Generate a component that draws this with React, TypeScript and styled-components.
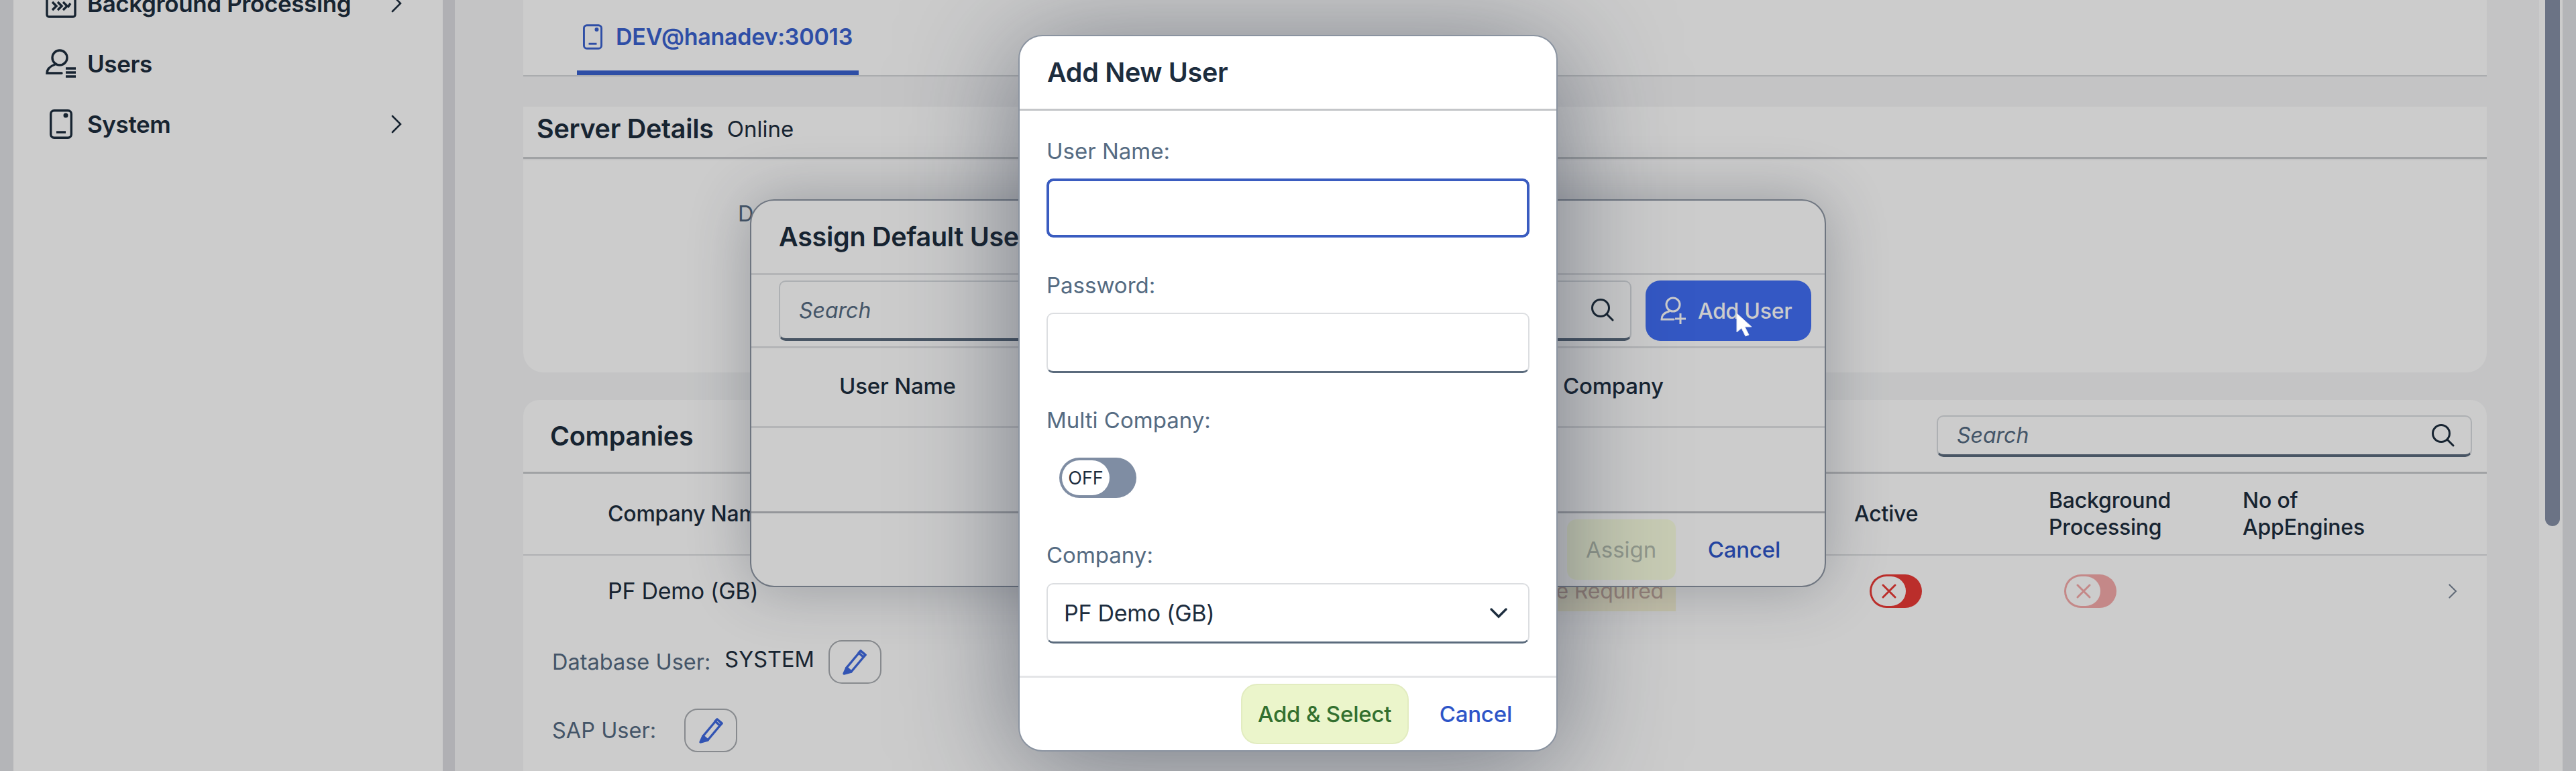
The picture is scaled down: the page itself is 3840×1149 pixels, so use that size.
import React from 'react';
import styled, { createGlobalStyle } from 'styled-components';

const Global = createGlobalStyle`
  html, body { margin: 0; padding: 0; width: 3840px; height: 1149px; overflow: hidden; background: #f5f6f7; }
  body { font-family: Inter, "Noto Sans", "Liberation Sans", sans-serif; color: #1d2d3e; }
  * { box-sizing: border-box; }
`;

const Page = styled.div`
  position: relative;
  display: flex;
  width: 3840px;
  height: 1149px;
  overflow: hidden;
  background: #f5f6f7;
`;
const Edge = styled.div`
  flex: 0 0 20px;
  background: #e2e3e7;
`;
const Sidebar = styled.nav`
  flex: 0 0 658px;
  background: #dcdde2;
  padding-right: 18px;
`;
const NavList = styled.ul`
  list-style: none;
  margin: -40px 0 0;
  padding: 0;
  height: 1189px;
  background: #fff;
`;
const NavItem = styled.li`
  display: flex;
  align-items: center;
  height: 90px;
  padding-left: 48px;
  font-size: 35px;
  font-weight: 600;
  letter-spacing: -0.4px;
  color: #1d2d3e;
`;
const NavIcon = styled.span`
  display: flex;
  width: 46px;
  margin-right: 16px;
  justify-content: center;
`;
const NavLabel = styled.span`
  flex: 1;
`;
const NavChevron = styled.span`
  display: flex;
  margin-right: 60px;
`;
const Main = styled.main`
  flex: 1;
  padding: 0 78px 0 102px;
  display: flex;
  flex-direction: column;
  min-width: 0;
`;
const TabCard = styled.section`
  flex: 0 0 110px;
  background: #fff;
  border-bottom: 2px solid #d5d7da;
  padding-left: 80px;
  display: flex;
`;
const Tab = styled.div`
  display: flex;
  align-items: center;
  gap: 20px;
  height: 112px;
  width: 420px;
  padding: 4px 0 0 9px;
  border-bottom: 7px solid #3a62d0;
  color: #3a62d0;
  font-size: 34px;
  font-weight: 600;
  letter-spacing: -0.25px;
  white-space: nowrap;
`;
const ServerCard = styled.section`
  margin-top: 45px;
  flex: 0 0 396px;
  display: flex;
  flex-direction: column;
`;
const ServerHeader = styled.header`
  flex: 0 0 78px;
  background: #fff;
  border-bottom: 3px solid #c9cbce;
  display: flex;
  align-items: center;
  padding: 0 0 9px 20px;
  gap: 20px;
`;
const CardTitle = styled.h2`
  margin: 0;
  font-size: 39.5px;
  font-weight: 600;
  letter-spacing: -0.3px;
  color: #1d2d3e;
`;
const Status = styled.span`
  font-size: 33px;
`;
const ServerBody = styled.div`
  flex: 1;
  margin-top: 2px;
  background: #fff;
  border-radius: 0 0 30px 30px;
  padding: 60px 0 0 320px;
`;
const MutedLabel = styled.span`
  font-size: 32.5px;
  color: #556b82;
  white-space: nowrap;
`;
const CompaniesCard = styled.section`
  margin-top: 41px;
  flex: 1;
  background: #fff;
  border-radius: 24px 24px 0 0;
  display: flex;
  flex-direction: column;
`;
const CompaniesHeader = styled.header`
  flex: 0 0 110px;
  display: flex;
  align-items: center;
  justify-content: space-between;
  padding: 0 22px 0 40px;
  border-bottom: 3px solid #c9cbce;
`;
const SearchBox = styled.div<{ $w: number; $h: number }>`
  width: ${p => p.$w}px;
  height: ${p => p.$h}px;
  display: flex;
  align-items: center;
  justify-content: space-between;
  background: #fff;
  border: 2px solid #d9dce0;
  border-bottom: 4px solid #5b6b7d;
  border-radius: 10px;
  padding: 0 24px 0 28px;
`;
const SearchHint = styled.span`
  font-size: 32px;
  font-style: italic;
  color: #556b82;
`;
const Columns = styled.div<{ $h: number; $line: string }>`
  flex: 0 0 ${p => p.$h}px;
  display: grid;
  grid-template-columns: 1400px 458px 290px 289px 1fr;
  align-items: center;
  padding-left: 126px;
  border-bottom: 2px solid ${p => p.$line};
  font-size: 32px;
  font-weight: 500;
  line-height: 40px;
  letter-spacing: -0.2px;
  color: #1d2d3e;
`;
const BodyText = styled.span`
  font-size: 34px;
  font-weight: 400;
  letter-spacing: -0.3px;
`;
const Badge = styled.span`
  justify-self: start;
  width: 192px;
  height: 60px;
  display: flex;
  align-items: center;
  justify-content: flex-end;
  white-space: nowrap;
  overflow: hidden;
  padding-right: 18px;
  background: #fbf7d9;
  color: #c8ada0;
  font-size: 32px;
  font-weight: 400;
`;
const RowEnd = styled.span`
  display: flex;
  justify-content: flex-end;
  padding-right: 44px;
`;
const Toggle = styled.span<{ $faded?: boolean }>`
  display: inline-flex;
  align-items: center;
  width: 78px;
  height: 50px;
  margin-left: 23px;
  padding-left: 3px;
  border-radius: 25px;
  background: #ea3a36;
  opacity: ${p => (p.$faded ? 0.42 : 1)};
`;
const ToggleKnob = styled.span`
  display: flex;
  align-items: center;
  justify-content: center;
  width: 51px;
  height: 44px;
  border-radius: 22px;
  background: #fff;
  color: #ea3a36;
`;
const Detail = styled.div<{ $top: number }>`
  display: flex;
  align-items: center;
  gap: 21px;
  height: 65px;
  margin-top: ${p => p.$top}px;
  padding-left: 43px;
`;
const DetailValue = styled.span`
  font-size: 32.5px;
  margin-top: -8px;
`;
const EditButton = styled.button`
  width: 79px;
  height: 65px;
  display: flex;
  align-items: center;
  justify-content: center;
  background: #fff;
  border: 2px solid #a9adb2;
  border-radius: 20px;
  padding: 0;
`;
const ScrollTrack = styled.div`
  flex: 0 0 35px;
  background: #fff;
  padding-left: 9px;
`;
const ScrollThumb = styled.div`
  width: 22px;
  height: 784px;
  background: #8690a7;
  border-radius: 0 0 11px 11px;
`;

const Scrim = styled.div`
  position: absolute;
  inset: 0;
  background: rgba(0, 0, 0, 0.2);
`;
const Dialog = styled.section<{ $l: number; $t: number; $w: number; $h: number }>`
  position: absolute;
  left: ${p => p.$l}px;
  top: ${p => p.$t}px;
  width: ${p => p.$w}px;
  height: ${p => p.$h}px;
  display: flex;
  flex-direction: column;
  background: #fff;
  border: 2px solid #8a93a0;
  border-radius: 36px;
`;
const AssignDialog = styled(Dialog)`
  box-shadow: 0 0 90px rgba(40, 50, 70, 0.3);
`;
const AddDialog = styled(Dialog)`
  box-shadow: 0 20px 170px rgba(30, 40, 60, 0.5);
`;
const DialogHeader = styled.header<{ $h: number; $pad: number }>`
  flex: 0 0 ${p => p.$h}px;
  display: flex;
  align-items: center;
  padding-left: ${p => p.$pad}px;
  font-size: 39.5px;
  font-weight: 600;
  letter-spacing: -0.3px;
  white-space: nowrap;
  color: #1d2d3e;
`;
const AddHeader = styled(DialogHeader)`
  border-bottom: 3px solid #c4c6c9;
`;
const AssignHeader = styled(DialogHeader)`
  border-bottom: 3px solid #e2e3e5;
`;
const Toolbar = styled.div`
  flex: 0 0 109px;
  display: flex;
  align-items: center;
  gap: 21px;
  padding: 0 0 0 41px;
  border-bottom: 3px solid #e2e3e5;
`;
const AddUserButton = styled.button`
  display: flex;
  align-items: center;
  gap: 16px;
  width: 247px;
  height: 90px;
  border: 0;
  border-radius: 22px;
  padding: 0 0 0 22px;
  background: #416ff5;
  color: #fff;
  font: 500 32px Inter, sans-serif;
  letter-spacing: -0.3px;
  white-space: nowrap;
`;
const AssignColumns = styled.div`
  flex: 0 0 119px;
  display: grid;
  grid-template-columns: 1079px 1fr;
  align-items: center;
  padding: 0 0 4px 131px;
  border-bottom: 3px solid #e2e3e5;
  font-size: 33px;
  font-weight: 500;
  letter-spacing: -0.2px;
`;
const AssignEmpty = styled.div`
  flex: 0 0 127px;
  border-bottom: 3px solid #b9bcc1;
`;
const AssignFooter = styled.footer`
  flex: 1;
  display: flex;
  align-items: center;
  justify-content: flex-end;
  gap: 48px;
  padding-right: 66px;
`;
const GhostAssign = styled.span`
  width: 162px;
  height: 90px;
  display: flex;
  align-items: center;
  justify-content: center;
  background: #fbffe2;
  border-radius: 14px;
  color: #b6bfaf;
  font-size: 33px;
`;
const LinkButton = styled.span`
  color: #2d55c8;
  font-size: 33px;
  font-weight: 500;
  letter-spacing: -0.2px;
`;
const AddBody = styled.div`
  flex: 1;
  padding: 40px 40px 0;
  border-bottom: 3px solid #e4e5e7;
  display: flex;
  flex-direction: column;
`;
const Field = styled.div<{ $gap: number; $after: number }>`
  display: flex;
  flex-direction: column;
  gap: ${p => p.$gap}px;
  margin-bottom: ${p => p.$after}px;
`;
const FieldLabel = styled.label`
  height: 40px;
  line-height: 40px;
  font-size: 33px;
  color: #556b82;
`;
const Input = styled.div<{ $focus?: boolean }>`
  height: ${p => (p.$focus ? 88 : 90)}px;
  background: #fff;
  border-radius: 10px;
  border: ${p => (p.$focus ? '4px solid #3a5cc0' : '2px solid #dcdee1')};
  border-bottom: ${p => (p.$focus ? '4px solid #3a5cc0' : '3px solid #5b6b7d')};
`;
const Select = styled(Input)`
  display: flex;
  align-items: center;
  justify-content: space-between;
  padding: 0 30px 0 24px;
  color: #1d2d3e;
  font-size: 34px;
  letter-spacing: -0.3px;
`;
const Switch = styled.div`
  width: 115px;
  height: 60px;
  margin-left: 19px;
  padding: 4px;
  border-radius: 30px;
  background: #7f8da3;
`;
const SwitchKnob = styled.div`
  width: 71px;
  height: 52px;
  display: flex;
  align-items: center;
  justify-content: center;
  border-radius: 26px;
  background: #fff;
  color: #1d2d3e;
  font-size: 27px;
`;
const AddFooter = styled.footer`
  flex: 0 0 108px;
  display: flex;
  align-items: center;
  justify-content: flex-end;
  gap: 46px;
  padding-right: 66px;
`;
const Emphasized = styled.button`
  width: 250px;
  height: 90px;
  background: #ebf5cb;
  border: 2px solid #e2ecc0;
  border-radius: 24px;
  color: #33702f;
  font: 500 33px Inter, sans-serif;
  letter-spacing: -0.2px;
  white-space: nowrap;
  padding: 0;
`;
const Cursor = styled.svg`
  position: absolute;
  left: 2587px;
  top: 465px;
`;

const SearchIcon = ({ s = 36 }: { s?: number }) => (
  <svg width={s} height={s} viewBox="0 0 36 36" fill="none" stroke="#1d2d3e" strokeWidth="3">
    <circle cx="16" cy="15" r="12.5" />
    <path d="M25 24l9 9" strokeLinecap="round" />
  </svg>
);
const Chevron = ({ s = 30, c = '#1d2d3e', w = 2.6 }: { s?: number; c?: string; w?: number }) => (
  <svg width={s * 0.6} height={s} viewBox="0 0 18 30" fill="none" stroke={c} strokeWidth={w} strokeLinecap="round">
    <path d="M3 3l12 12L3 27" />
  </svg>
);
const DeviceIcon = ({ c = '#1d2d3e', w = 34, h = 44 }: { c?: string; w?: number; h?: number }) => (
  <svg width={w} height={h} viewBox="0 0 34 44" fill="none" stroke={c} strokeWidth="3.4">
    <rect x="1.7" y="1.7" width="30.6" height="40.6" rx="5" />
    <circle cx="24" cy="9" r="1.8" fill={c} />
    <path d="M10 34h14" />
  </svg>
);
const UsersIcon = () => (
  <svg width="46" height="44" viewBox="0 0 46 44" fill="none" stroke="#1d2d3e" strokeWidth="3.4">
    <circle cx="21" cy="13" r="11" />
    <path d="M14 23C6 26 2 30 2 36h22" strokeLinecap="round" />
    <path d="M30 29h15M30 35h15M30 41h15" />
  </svg>
);
const ProcessIcon = () => (
  <svg width="46" height="44" viewBox="0 0 46 44" fill="none" stroke="#1d2d3e" strokeWidth="3.4">
    <rect x="2" y="12" width="42" height="30" rx="3" />
    <path d="M10 20l6 6-6 6M18 20l6 6-6 6M26 20l6 6-6 6M37 22l-4 6" />
    <circle cx="30" cy="4" r="9" fill="#fff" />
  </svg>
);
const PencilIcon = () => (
  <svg width="40" height="42" viewBox="0 0 40 42" fill="none" stroke="#3f69e0" strokeWidth="3.4" strokeLinejoin="round">
    <path d="M8 29L29 4l7 6-21 25z" />
    <path d="M29 4l7 6-3 3-7-6z" fill="#fff" />
    <path d="M8 29l-4 9 11-3z" fill="#3f69e0" />
  </svg>
);
const XMark = () => (
  <svg width="24" height="24" viewBox="0 0 24 24" stroke="currentColor" strokeWidth="3" strokeLinecap="round">
    <path d="M3 3l18 18M21 3L3 21" />
  </svg>
);
const AddUserIcon = () => (
  <svg width="40" height="42" viewBox="0 0 40 42" fill="none" stroke="#fff" strokeWidth="3">
    <circle cx="19" cy="12" r="10" />
    <path d="M13 22C6 24 2 28 2 34h18" strokeLinecap="round" />
    <path d="M30 25v16M22 33h16" />
  </svg>
);

export default function App() {
  return (
    <Page>
      <Global />
      <Edge />
      <Sidebar>
        <NavList>
          <NavItem>
            <NavIcon><ProcessIcon /></NavIcon>
            <NavLabel>Background Processing</NavLabel>
            <NavChevron><Chevron /></NavChevron>
          </NavItem>
          <NavItem>
            <NavIcon><UsersIcon /></NavIcon>
            <NavLabel>Users</NavLabel>
          </NavItem>
          <NavItem>
            <NavIcon><DeviceIcon /></NavIcon>
            <NavLabel>System</NavLabel>
            <NavChevron><Chevron /></NavChevron>
          </NavItem>
        </NavList>
      </Sidebar>
      <Main>
        <TabCard>
          <Tab>
            <DeviceIcon c="#3a62d0" w={29} h={40} />
            DEV@hanadev:30013
          </Tab>
        </TabCard>
        <ServerCard>
          <ServerHeader>
            <CardTitle>Server Details</CardTitle>
            <Status>Online</Status>
          </ServerHeader>
          <ServerBody>
            <MutedLabel>Description:</MutedLabel>
          </ServerBody>
        </ServerCard>
        <CompaniesCard>
          <CompaniesHeader>
            <CardTitle>Companies</CardTitle>
            <SearchBox $w={798} $h={62}>
              <SearchHint>Search</SearchHint>
              <SearchIcon />
            </SearchBox>
          </CompaniesHeader>
          <Columns $h={122} $line="#dcdee0">
            <span>Company Name</span>
            <span>Status</span>
            <span>Active</span>
            <span>Background<br />Processing</span>
            <span>No of<br />AppEngines</span>
          </Columns>
          <Columns $h={108} $line="transparent">
            <BodyText>PF Demo (GB)</BodyText>
            <Badge>Upgrade Required</Badge>
            <span><Toggle><ToggleKnob><XMark /></ToggleKnob></Toggle></span>
            <span><Toggle $faded><ToggleKnob><XMark /></ToggleKnob></Toggle></span>
            <RowEnd><Chevron s={24} c="#7a8696" /></RowEnd>
          </Columns>
          <Detail $top={18}>
            <MutedLabel>Database User:</MutedLabel>
            <DetailValue>SYSTEM</DetailValue>
            <EditButton><PencilIcon /></EditButton>
          </Detail>
          <Detail $top={37}>
            <MutedLabel>SAP User:</MutedLabel>
            <DetailValue />
            <EditButton><PencilIcon /></EditButton>
          </Detail>
        </CompaniesCard>
      </Main>
      <ScrollTrack><ScrollThumb /></ScrollTrack>
      <Edge />

      <AssignDialog $l={1118} $t={297} $w={1604} $h={578}>
        <AssignHeader $h={111} $pad={41}>Assign Default User</AssignHeader>
        <Toolbar>
          <SearchBox $w={1271} $h={90}>
            <SearchHint>Search</SearchHint>
            <SearchIcon />
          </SearchBox>
          <AddUserButton><AddUserIcon />Add User</AddUserButton>
        </Toolbar>
        <AssignColumns>
          <span>User Name</span>
          <span>Company</span>
        </AssignColumns>
        <AssignEmpty />
        <AssignFooter>
          <GhostAssign>Assign</GhostAssign>
          <LinkButton>Cancel</LinkButton>
        </AssignFooter>
      </AssignDialog>

      <Scrim />

      <AddDialog $l={1518} $t={52} $w={804} $h={1068}>
        <AddHeader $h={111} $pad={41}>Add New User</AddHeader>
        <AddBody>
          <Field $gap={21} $after={51}>
            <FieldLabel>User Name:</FieldLabel>
            <Input $focus />
          </Field>
          <Field $gap={21} $after={50}>
            <FieldLabel>Password:</FieldLabel>
            <Input />
          </Field>
          <Field $gap={36} $after={65}>
            <FieldLabel>Multi Company:</FieldLabel>
            <Switch><SwitchKnob>OFF</SwitchKnob></Switch>
          </Field>
          <Field $gap={22} $after={0}>
            <FieldLabel>Company:</FieldLabel>
            <Select>
              PF Demo (GB)
              <svg width="28" height="18" viewBox="0 0 28 18" fill="none" stroke="#1d2d3e" strokeWidth="3.4" strokeLinecap="round"><path d="M3 3l11 11L25 3" /></svg>
            </Select>
          </Field>
        </AddBody>
        <AddFooter>
          <Emphasized>Add &amp; Select</Emphasized>
          <LinkButton>Cancel</LinkButton>
        </AddFooter>
      </AddDialog>

      <Cursor width="28" height="38" viewBox="0 0 28 38">
        <path d="M2 2v28l7-6 6 12 5-2-6-12h10z" fill="#fff" stroke="#dfe3ee" strokeWidth="1" />
      </Cursor>
    </Page>
  );
}
